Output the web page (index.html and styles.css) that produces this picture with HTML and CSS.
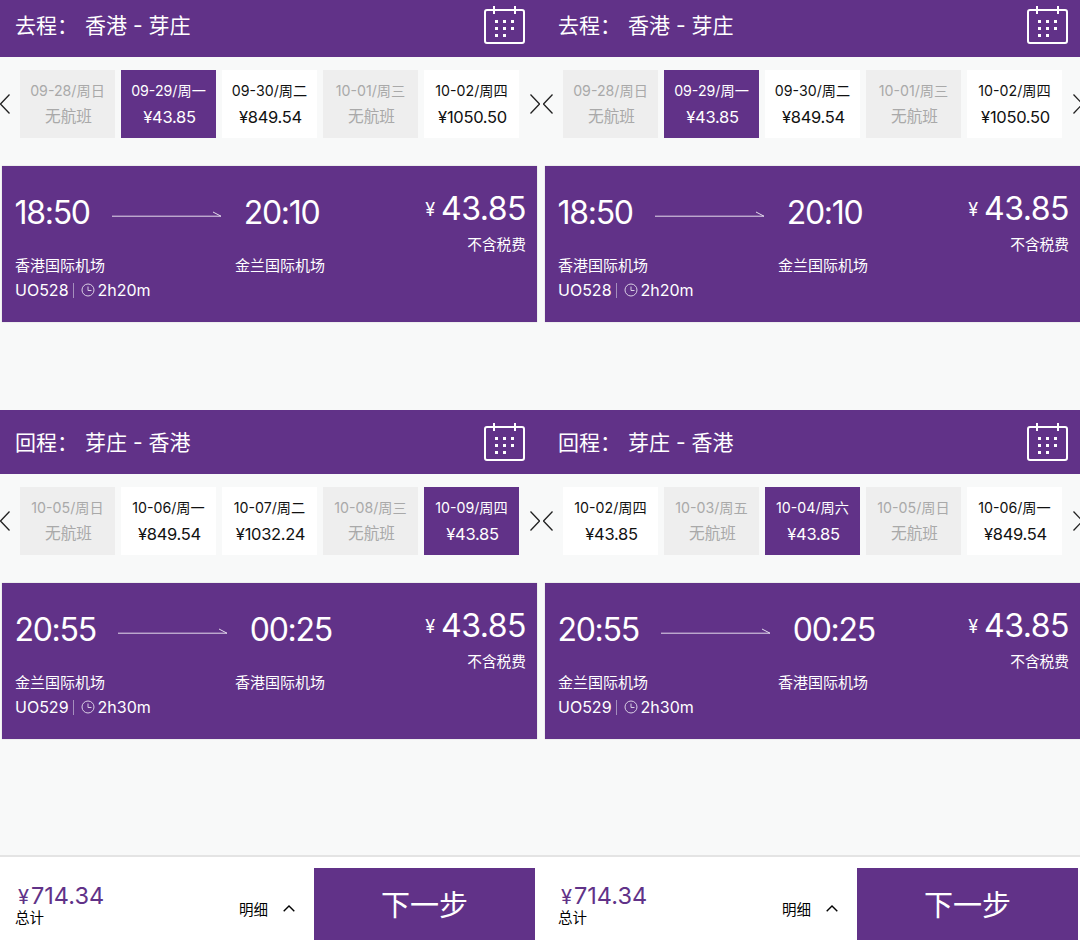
FILE: index.html
```html
<!DOCTYPE html>
<html lang="zh-CN">
<head>
<meta charset="utf-8">
<title>选择航班</title>
<link rel="stylesheet" href="styles.css">
</head>
<body>
<svg class="defs" width="0" height="0" aria-hidden="true">
  <defs>
    <symbol id="cal" viewBox="0 0 42 38">
      <rect x="1" y="4" width="39" height="33" rx="2" fill="none" stroke="currentColor" stroke-width="2"/>
      <path d="M10 0v8M31 0v8" stroke="currentColor" stroke-width="2" fill="none"/>
      <g fill="currentColor">
        <rect x="11" y="14" width="3" height="3"/><rect x="19" y="14" width="3" height="3"/><rect x="27" y="14" width="3" height="3"/>
        <rect x="11" y="21" width="3" height="3"/><rect x="19" y="21" width="3" height="3"/><rect x="27" y="21" width="3" height="3"/>
        <rect x="11" y="28" width="3" height="3"/><rect x="19" y="28" width="3" height="3"/>
      </g>
    </symbol>
    <symbol id="chev-l" viewBox="0 0 10 20"><path d="M9.5 .5L.5 10l9 9.5" fill="none" stroke="currentColor" stroke-width="1.3"/></symbol>
    <symbol id="chev-r" viewBox="0 0 10 20"><path d="M.5 .5L9.5 10 .5 19.5" fill="none" stroke="currentColor" stroke-width="1.3"/></symbol>
    <symbol id="arrow" viewBox="0 0 110 6"><path d="M0 5.2H109L101 1" fill="none" stroke="currentColor" stroke-width="1"/></symbol>
    <symbol id="clock" viewBox="0 0 14 14"><circle cx="7" cy="7" r="6" fill="none" stroke="currentColor" stroke-width="1"/><path d="M7 3.5V7.5H10.5" fill="none" stroke="currentColor" stroke-width="1"/></symbol>
  </defs>
</svg>
<main class="pages">
  <div class="page">
    <section class="leg">
      <header class="leg-head"><h2 class="leg-title"><span class="leg-type">去程：</span>香港 - 芽庄</h2><svg class="cal"><use href="#cal"/></svg></header>
      <div class="strip">
        <svg class="chev"><use href="#chev-l"/></svg>
        <div class="chips">
          <div class="chip off"><span class="d">09-28/周日</span><span class="p">无航班</span></div>
          <div class="chip on"><span class="d">09-29/周一</span><span class="p">¥43.85</span></div>
          <div class="chip"><span class="d">09-30/周二</span><span class="p">¥849.54</span></div>
          <div class="chip off"><span class="d">10-01/周三</span><span class="p">无航班</span></div>
          <div class="chip"><span class="d">10-02/周四</span><span class="p">¥1050.50</span></div>
        </div>
        <svg class="chev"><use href="#chev-r"/></svg>
      </div>
      <article class="card">
        <div class="card-main">
          <div class="times"><span class="time">18:50</span><svg class="arrow"><use href="#arrow"/></svg><span class="time">20:10</span></div>
          <div class="ports"><span class="port">香港国际机场</span><span class="port">金兰国际机场</span></div>
          <div class="meta"><span>UO528</span><i class="bar"></i><svg class="clock"><use href="#clock"/></svg><span>2h20m</span></div>
        </div>
        <div class="fare"><div class="amount"><span class="yen">¥</span>43.85</div><div class="tax">不含税费</div></div>
      </article>
    </section>
    <section class="leg">
      <header class="leg-head"><h2 class="leg-title"><span class="leg-type">回程：</span>芽庄 - 香港</h2><svg class="cal"><use href="#cal"/></svg></header>
      <div class="strip">
        <svg class="chev"><use href="#chev-l"/></svg>
        <div class="chips">
          <div class="chip off"><span class="d">10-05/周日</span><span class="p">无航班</span></div>
          <div class="chip"><span class="d">10-06/周一</span><span class="p">¥849.54</span></div>
          <div class="chip"><span class="d">10-07/周二</span><span class="p">¥1032.24</span></div>
          <div class="chip off"><span class="d">10-08/周三</span><span class="p">无航班</span></div>
          <div class="chip on"><span class="d">10-09/周四</span><span class="p">¥43.85</span></div>
        </div>
        <svg class="chev"><use href="#chev-r"/></svg>
      </div>
      <article class="card">
        <div class="card-main">
          <div class="times"><span class="time">20:55</span><svg class="arrow"><use href="#arrow"/></svg><span class="time">00:25</span></div>
          <div class="ports"><span class="port">金兰国际机场</span><span class="port">香港国际机场</span></div>
          <div class="meta"><span>UO529</span><i class="bar"></i><svg class="clock"><use href="#clock"/></svg><span>2h30m</span></div>
        </div>
        <div class="fare"><div class="amount"><span class="yen">¥</span>43.85</div><div class="tax">不含税费</div></div>
      </article>
    </section>
    <footer class="foot">
      <div class="total"><div class="total-num"><span class="total-yen">¥</span>714.34</div><div class="total-label">总计</div></div>
      <div class="detail"><span>明细</span><svg class="caret" viewBox="0 0 12 7"><path d="M.7 6.3L6 1l5.3 5.3" fill="none" stroke="currentColor" stroke-width="1.4"/></svg></div>
      <button class="next">下一步</button>
    </footer>
  </div>
  <div class="page">
    <section class="leg">
      <header class="leg-head"><h2 class="leg-title"><span class="leg-type">去程：</span>香港 - 芽庄</h2><svg class="cal"><use href="#cal"/></svg></header>
      <div class="strip">
        <svg class="chev"><use href="#chev-l"/></svg>
        <div class="chips">
          <div class="chip off"><span class="d">09-28/周日</span><span class="p">无航班</span></div>
          <div class="chip on"><span class="d">09-29/周一</span><span class="p">¥43.85</span></div>
          <div class="chip"><span class="d">09-30/周二</span><span class="p">¥849.54</span></div>
          <div class="chip off"><span class="d">10-01/周三</span><span class="p">无航班</span></div>
          <div class="chip"><span class="d">10-02/周四</span><span class="p">¥1050.50</span></div>
        </div>
        <svg class="chev"><use href="#chev-r"/></svg>
      </div>
      <article class="card">
        <div class="card-main">
          <div class="times"><span class="time">18:50</span><svg class="arrow"><use href="#arrow"/></svg><span class="time">20:10</span></div>
          <div class="ports"><span class="port">香港国际机场</span><span class="port">金兰国际机场</span></div>
          <div class="meta"><span>UO528</span><i class="bar"></i><svg class="clock"><use href="#clock"/></svg><span>2h20m</span></div>
        </div>
        <div class="fare"><div class="amount"><span class="yen">¥</span>43.85</div><div class="tax">不含税费</div></div>
      </article>
    </section>
    <section class="leg">
      <header class="leg-head"><h2 class="leg-title"><span class="leg-type">回程：</span>芽庄 - 香港</h2><svg class="cal"><use href="#cal"/></svg></header>
      <div class="strip">
        <svg class="chev"><use href="#chev-l"/></svg>
        <div class="chips">
          <div class="chip"><span class="d">10-02/周四</span><span class="p">¥43.85</span></div>
          <div class="chip off"><span class="d">10-03/周五</span><span class="p">无航班</span></div>
          <div class="chip on"><span class="d">10-04/周六</span><span class="p">¥43.85</span></div>
          <div class="chip off"><span class="d">10-05/周日</span><span class="p">无航班</span></div>
          <div class="chip"><span class="d">10-06/周一</span><span class="p">¥849.54</span></div>
        </div>
        <svg class="chev"><use href="#chev-r"/></svg>
      </div>
      <article class="card">
        <div class="card-main">
          <div class="times"><span class="time">20:55</span><svg class="arrow"><use href="#arrow"/></svg><span class="time">00:25</span></div>
          <div class="ports"><span class="port">金兰国际机场</span><span class="port">香港国际机场</span></div>
          <div class="meta"><span>UO529</span><i class="bar"></i><svg class="clock"><use href="#clock"/></svg><span>2h30m</span></div>
        </div>
        <div class="fare"><div class="amount"><span class="yen">¥</span>43.85</div><div class="tax">不含税费</div></div>
      </article>
    </section>
    <footer class="foot">
      <div class="total"><div class="total-num"><span class="total-yen">¥</span>714.34</div><div class="total-label">总计</div></div>
      <div class="detail"><span>明细</span><svg class="caret" viewBox="0 0 12 7"><path d="M.7 6.3L6 1l5.3 5.3" fill="none" stroke="currentColor" stroke-width="1.4"/></svg></div>
      <button class="next">下一步</button>
    </footer>
  </div>
</main>
</body>
</html>
```
FILE: styles.css
```css
* { box-sizing: border-box; }
html, body { margin: 0; height: 100%; }
body {
  width: 1080px;
  height: 940px;
  overflow: hidden;
  background: #f8f9f9;
  font-family: Inter, "Noto Sans CJK SC", sans-serif;
  color: #111;
}
.defs { display: block; height: 0; }
.pages { display: flex; height: 940px; overflow: hidden; }
.page {
  flex: 0 0 543px;
  height: 940px;
  display: flex;
  flex-direction: column;
  overflow: hidden;
}
.leg { height: 417px; flex: none; }
.leg:first-child { margin-top: -7px; }
.leg-head {
  height: 64px;
  background: #613288;
  color: #fff;
  display: flex;
  align-items: center;
  justify-content: space-between;
  padding: 0 17px 0 15px;
}
.leg-title { margin: 0 0 2px; font-size: 21px; font-weight: 400; }
.leg-type { display: inline-block; width: 70px; }
.cal { width: 42px; height: 38px; display: block; }
.strip {
  margin-top: 13px;
  height: 68px;
  display: flex;
  align-items: center;
  justify-content: space-between;
  padding-right: 3px;
  color: #222;
}
.chev { width: 10px; height: 20px; display: block; flex: none; }
.chips { display: flex; gap: 6px; margin-right: 1px; }
.chip {
  width: 95px;
  height: 68px;
  background: #fff;
  color: #111;
  display: flex;
  flex-direction: column;
  align-items: center;
  padding-top: 11px;
}
.chip .d { font-size: 14.2px; line-height: 20px; }
.chip .p { font-size: 16.5px; line-height: 24px; margin-top: 4px; padding-left: 2px; letter-spacing: -.3px; }
.chip.off { background: #eee; color: #a9a9a9; }
.chip.off .p { font-size: 15.7px; letter-spacing: 0; }
.chip.on { background: #613288; color: #fff; }
.card {
  margin: 28px 6px 0 2px;
  height: 156px;
  background: #613288;
  color: #fff;
  display: flex;
  justify-content: space-between;
  padding: 0 11px 0 13px;
  box-shadow: 0 0 1px rgba(0,0,0,.25);
}
.times { display: flex; align-items: center; gap: 22px; margin-top: 27px; height: 40px; margin-left: -.5px; }
.time { font-size: 32px; line-height: 40px; letter-spacing: -1.3px; }
.arrow { width: 110px; height: 6px; display: block; color: #e4dcec; margin-top: 1px; }
.ports { display: flex; margin-top: 23px; }
.port { font-size: 15px; line-height: 20px; }
.port:first-child { width: 220px; }
.meta { display: flex; align-items: center; margin-top: 2px; height: 24px; font-size: 16px; }
.bar { width: 1px; height: 15px; background: #a58fbd; margin: 0 7px 0 4px; }
.clock { width: 14px; height: 14px; display: block; margin-right: 3px; color: #d9cfe4; }
.fare { text-align: right; padding-top: 22px; }
.amount { font-size: 32px; line-height: 42px; letter-spacing: -.5px; }
.yen { font-size: 18px; margin-right: 6px; vertical-align: 4px; letter-spacing: 0; }
.tax { font-size: 14.7px; line-height: 20px; margin-top: 4px; }
.foot {
  margin-top: auto;
  flex: none;
  height: 85px;
  background: #fff;
  border-top: 2px solid #e4e4e4;
  display: flex;
  align-items: flex-start;
  padding: 11px 8px 0 15px;
}
.total { width: 224px; padding-top: 14px; }
.total-num { font-size: 23.5px; line-height: 28px; color: #613288; padding-left: 3px; }
.total-yen { font-size: 20px; margin-right: 2px; }
.total-label { font-size: 14.5px; line-height: 18px; color: #000; margin-top: -2px; }
.detail {
  width: 75px;
  display: flex;
  align-items: center;
  gap: 15px;
  padding-top: 30px;
  font-size: 14.5px;
  color: #000;
}
.caret { width: 12px; height: 7px; display: block; }
.next {
  width: 221px;
  height: 72px;
  flex: none;
  border: 0;
  background: #613288;
  color: #fff;
  font-family: inherit;
  font-size: 29px;
  padding: 0 0 2px;
}
```
